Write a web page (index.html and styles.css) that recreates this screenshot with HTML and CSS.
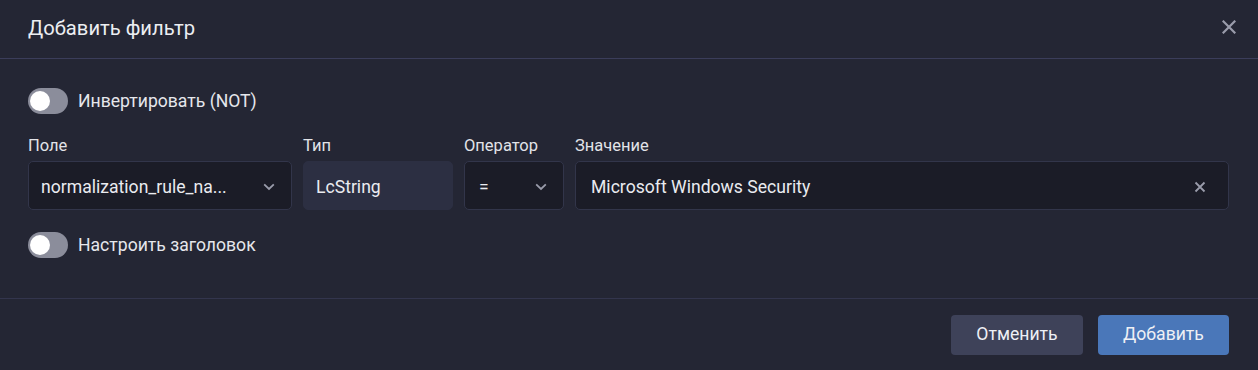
FILE: index.html
```html
<!DOCTYPE html>
<html lang="ru">
<head>
<meta charset="utf-8">
<title>Добавить фильтр</title>
<link rel="stylesheet" href="styles.css">
</head>
<body>
<div class="dialog">
  <div class="header">
    <div class="title">Добавить фильтр</div>
    <button class="close" aria-label="Закрыть">
      <svg width="14" height="14" viewBox="0 0 14 14"><path d="M1.5 1.5 L12.5 12.5 M12.5 1.5 L1.5 12.5" stroke="#9a9cab" stroke-width="2.2" stroke-linecap="square"/></svg>
    </button>
  </div>
  <div class="body">
    <label class="switch-row">
      <span class="switch"><span class="knob"></span></span>
      <span class="switch-label">Инвертировать (NOT)</span>
    </label>
    <div class="fields">
      <div class="col col-field">
        <div class="lbl">Поле</div>
        <div class="input select">
          <span class="val ellip">normalization_rule_na...</span>
          <svg class="chev" width="12" height="8" viewBox="0 0 12 8"><path d="M1.2 1.4 L6 6 L10.8 1.4" fill="none" stroke="#9a9cab" stroke-width="1.8"/></svg>
        </div>
      </div>
      <div class="col col-type">
        <div class="lbl">Тип</div>
        <div class="input static"><span class="val">LcString</span></div>
      </div>
      <div class="col col-op">
        <div class="lbl">Оператор</div>
        <div class="input select">
          <span class="val">=</span>
          <svg class="chev" width="12" height="8" viewBox="0 0 12 8"><path d="M1.2 1.4 L6 6 L10.8 1.4" fill="none" stroke="#9a9cab" stroke-width="1.8"/></svg>
        </div>
      </div>
      <div class="col col-value">
        <div class="lbl">Значение</div>
        <div class="input text">
          <span class="val">Microsoft Windows Security</span>
          <svg class="clear" width="12" height="12" viewBox="0 0 12 12"><path d="M1.5 1.5 L10.5 10.5 M10.5 1.5 L1.5 10.5" stroke="#9a9cab" stroke-width="1.8"/></svg>
        </div>
      </div>
    </div>
    <label class="switch-row">
      <span class="switch"><span class="knob"></span></span>
      <span class="switch-label">Настроить заголовок</span>
    </label>
  </div>
  <div class="footer">
    <button class="btn btn-cancel">Отменить</button>
    <button class="btn btn-primary">Добавить</button>
  </div>
</div>
</body>
</html>
```

FILE: styles.css
```css
* { box-sizing: border-box; }
html, body {
  margin: 0;
  padding: 0;
  background: #242634;
}
body {
  font-family: Roboto, "Liberation Sans", Arial, sans-serif;
  color: #e4e5ea;
  width: 1258px;
  height: 370px;
  overflow: hidden;
}
.dialog {
  width: 1258px;
  height: 370px;
  display: flex;
  flex-direction: column;
}
.header {
  height: 59px;
  border-bottom: 1px solid #3b3d5a;
  display: flex;
  align-items: center;
  justify-content: space-between;
  padding: 0 20px 0 28px;
}
.title {
  font-size: 20.2px;
  color: #eceef2;
  margin-top: -2px;
}
.close {
  background: none;
  border: 0;
  padding: 0;
  width: 18px;
  height: 18px;
  display: flex;
  align-items: center;
  justify-content: center;
  cursor: pointer;
  margin-top: -4px;
}
.body {
  flex: 1;
  border-bottom: 1px solid #33354d;
  padding: 29px 29px 0 28px;
  display: flex;
  flex-direction: column;
}
.switch-row {
  display: flex;
  align-items: center;
  gap: 10px;
  height: 26px;
}
.switch {
  width: 40px;
  height: 26px;
  border-radius: 13px;
  background: #8b8d9b;
  padding: 3px 0 0 2px;
  flex: none;
}
.knob {
  display: block;
  width: 20px;
  height: 20px;
  border-radius: 50%;
  background: #ffffff;
}
.switch-label {
  font-size: 17.6px;
  color: #e6e7ec;
}
.fields {
  display: flex;
  gap: 11px;
  margin-top: 22px;
  margin-bottom: 22px;
}
.col {
  display: flex;
  flex-direction: column;
  gap: 7px;
}
.lbl {
  font-size: 16.5px;
  color: #e2e3e8;
  line-height: 18px;
  padding-top: 1px;
  margin-bottom: -1px;
}
.col-field { width: 264px; }
.col-type { width: 150px; }
.col-op { width: 100px; }
.col-value { flex: 1; }
.input {
  height: 49px;
  border-radius: 5px;
  display: flex;
  align-items: center;
  font-size: 17.6px;
  color: #eaebf0;
}
.val { padding-top: 3px; }
.select, .text {
  background: #1b1c27;
  border: 1px solid #32354a;
}
.static {
  background: #2c2f42;
  border: 1px solid #2c2f42;
}
.col-field .input { padding: 0 16px 0 12px; }
.col-type .input { padding: 0 12px; }
.col-op .input { padding: 0 16px 0 14px; }
.col-value .input { padding: 0 22px 0 15px; }
.val { flex: 1; white-space: nowrap; overflow: hidden; }
.chev { flex: none; margin-top: 2px; }
.clear { flex: none; margin-top: 2px; }
.footer {
  height: 71px;
  display: flex;
  align-items: center;
  justify-content: flex-end;
  gap: 15px;
  padding: 0 29px 0 0;
}
.btn {
  height: 40px;
  border: 0;
  border-radius: 4px;
  font-family: Roboto, "Liberation Sans", Arial, sans-serif;
  font-size: 17.6px;
  color: #eef0f5;
  cursor: pointer;
  padding: 0 0 2px 0;
}
.btn-cancel {
  width: 132px;
  background: #3e4259;
}
.btn-primary {
  width: 131px;
  background: #4a77b9;
}
```
